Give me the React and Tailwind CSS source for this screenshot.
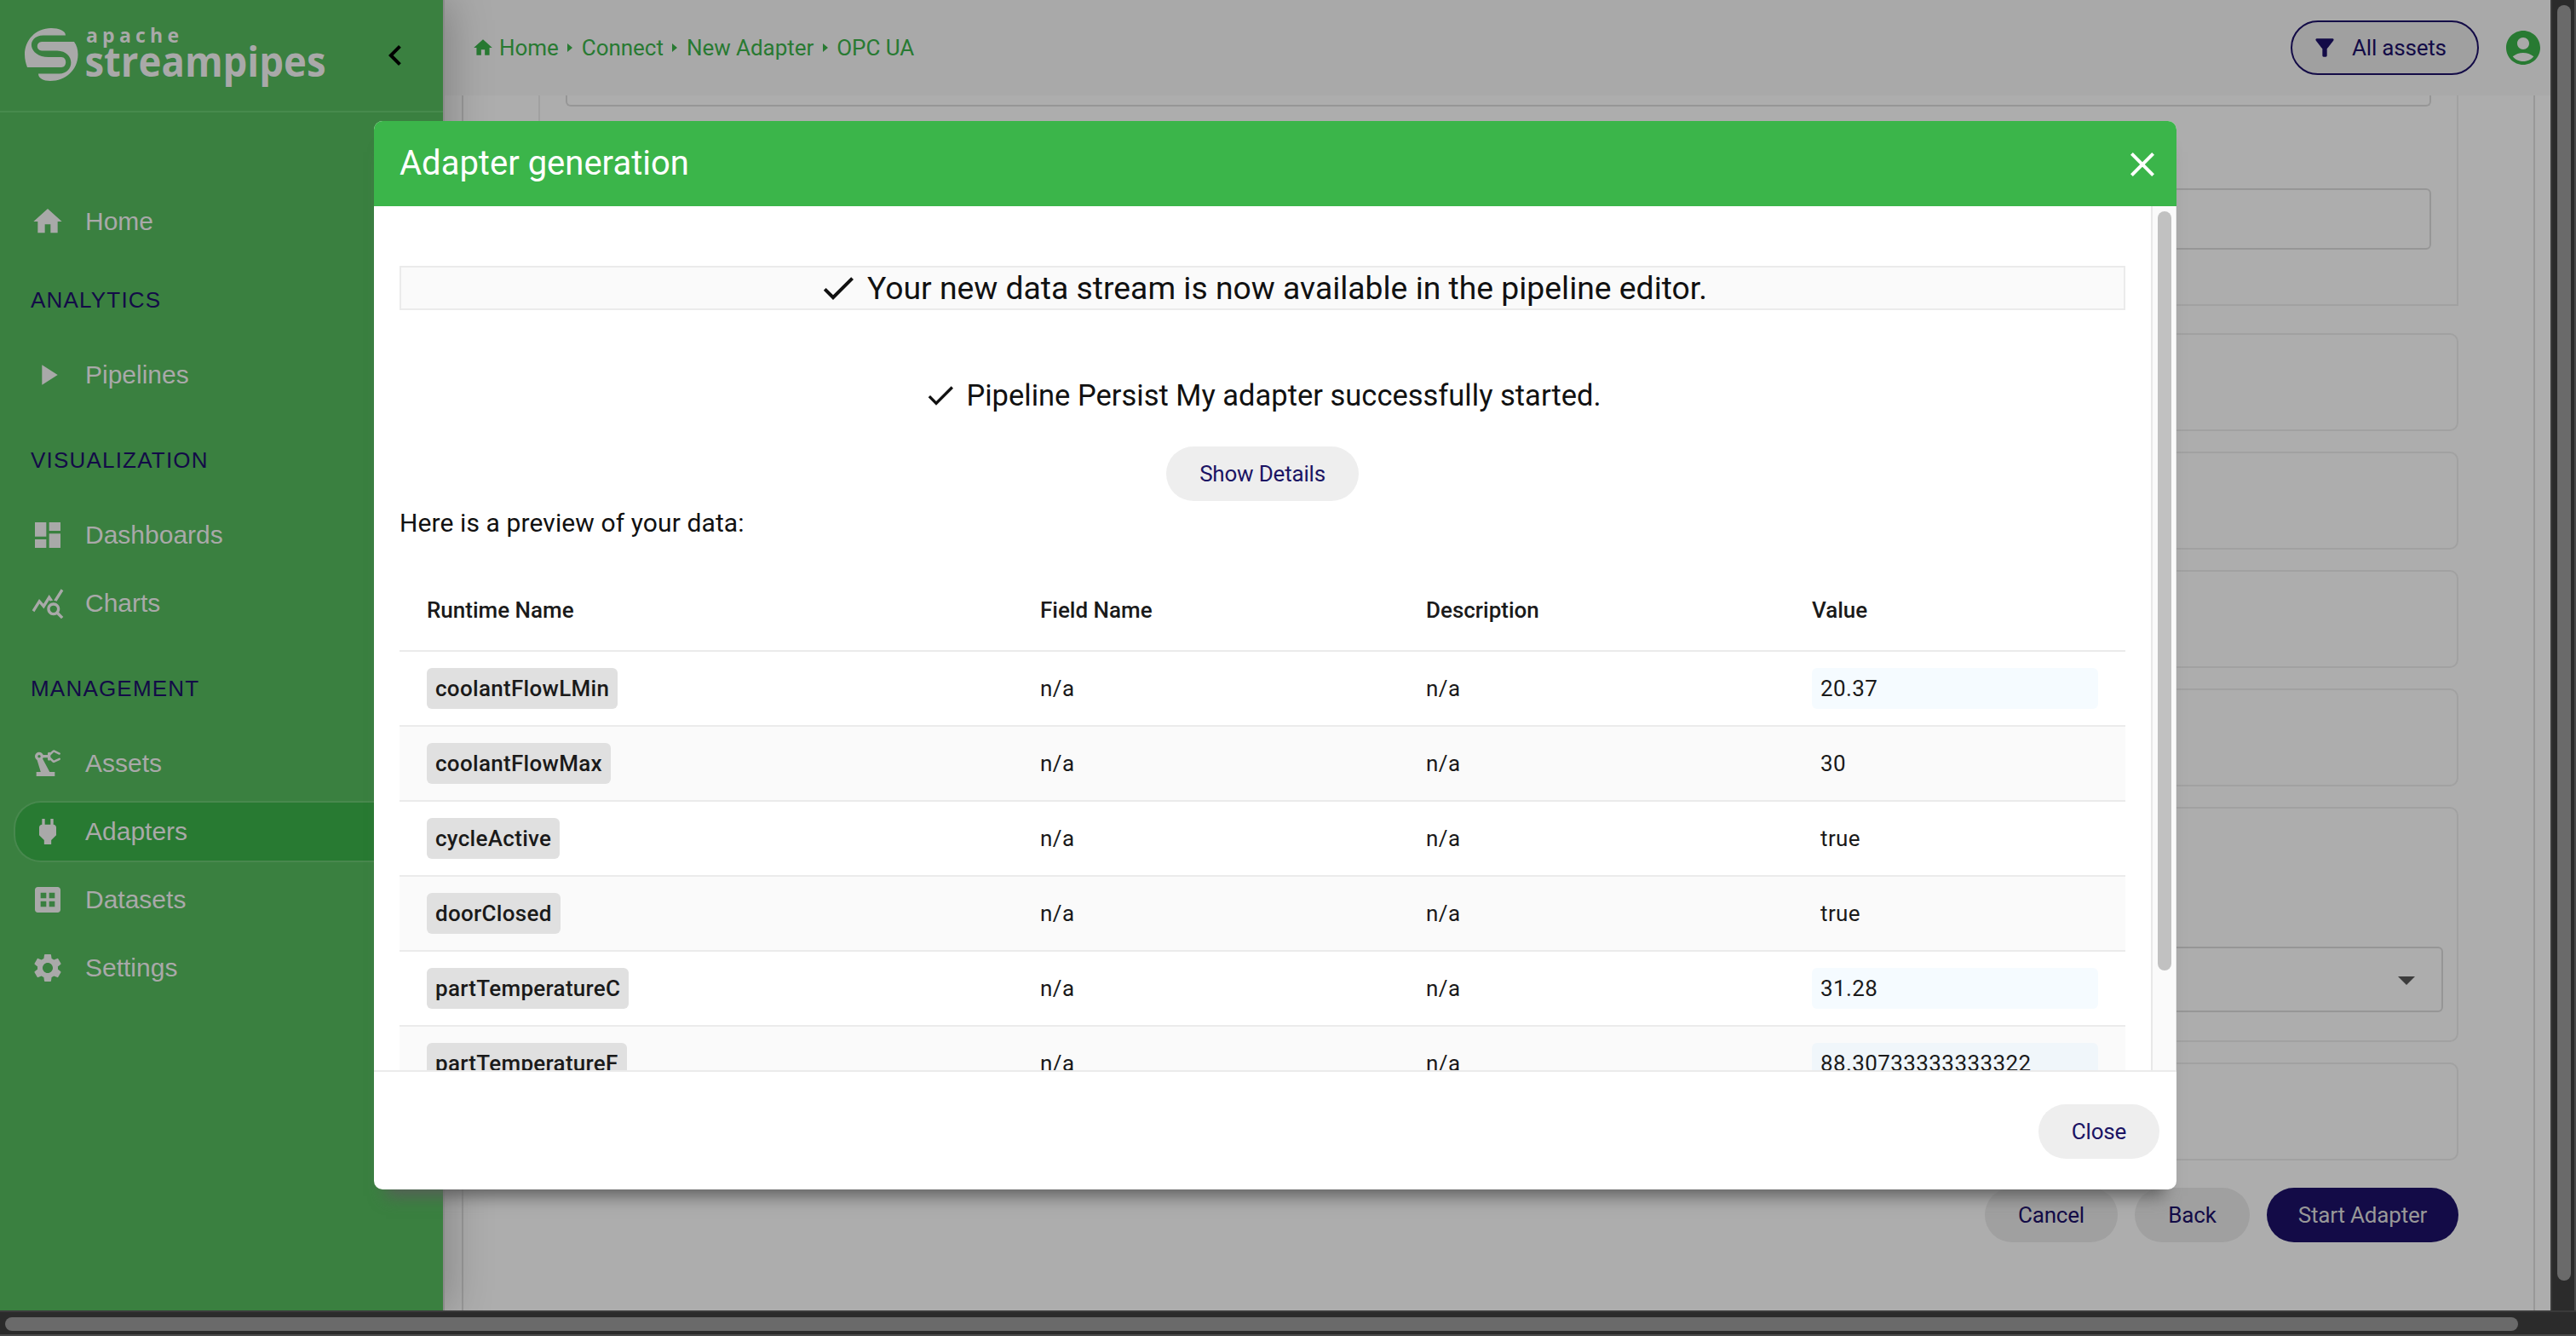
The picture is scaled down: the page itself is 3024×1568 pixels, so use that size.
import {
    MdAccountCircle,
    MdArrowDropDown,
    MdCheck,
    MdClose,
    MdDashboard,
    MdDataset,
    MdFilterAlt,
    MdHome,
    MdKeyboardArrowLeft,
    MdPlayArrow,
    MdPower,
    MdPrecisionManufacturing,
    MdQueryStats,
    MdSettings,
} from "react-icons/md";

const navGroups = [
    { items: [{ label: "Home", Icon: MdHome }] },
    { title: "ANALYTICS", items: [{ label: "Pipelines", Icon: MdPlayArrow }] },
    {
        title: "VISUALIZATION",
        items: [
            { label: "Dashboards", Icon: MdDashboard },
            { label: "Charts", Icon: MdQueryStats },
        ],
    },
    {
        title: "MANAGEMENT",
        items: [
            { label: "Assets", Icon: MdPrecisionManufacturing },
            { label: "Adapters", Icon: MdPower, active: true },
            { label: "Datasets", Icon: MdDataset },
            { label: "Settings", Icon: MdSettings },
        ],
    },
];

const breadcrumbs = ["Home", "Connect", "New Adapter", "OPC UA"];

const previewRows = [
    { name: "coolantFlowLMin", value: "20.37", changed: true },
    { name: "coolantFlowMax", value: "30" },
    { name: "cycleActive", value: "true" },
    { name: "doorClosed", value: "true" },
    { name: "partTemperatureC", value: "31.28", changed: true },
    { name: "partTemperatureF", value: "88.30733333333322", changed: true },
];

function Logo() {
    return (
        <svg className="w-[360px] h-[84px] shrink-0 overflow-visible" viewBox="0 0 360 84" fill="#a9a9a9">
            <path d="M33 8C15 8 2 22 2 39C2 45 3.500 50 5 54H45C52 54 52 42 45 42H30C6 42 3 17 24 16.500H50C50 11 42 8 33 8Z" />
            <path d="M60 24H22C15 24 15 34.500 22 34.500H40C62 35 61 62 42 61.500H18C18 67 24 70 32 70C50 70 64.500 57 64.500 39C64.500 33 63 28 60 24Z" />
            <text x="74" y="24.500" fontSize="23" fontWeight="700" textLength="109" fontFamily="Open Sans, sans-serif">apache</text>
            <text x="72.500" y="65" fontSize="48" fontWeight="700" textLength="283" lengthAdjust="spacingAndGlyphs" fontFamily="Open Sans, sans-serif">streampipes</text>
        </svg>
    );
}

function NavItem({ label, Icon, active }) {
    return (
        <div className={active
            ? "flex items-center h-[72px] ml-4 pl-[18px] gap-6 rounded-l-[32px] border-2 border-r-0 border-[#48884e] bg-[#287a32]"
            : "flex items-center h-[72px] ml-4 pl-5 gap-6"}>
            <Icon className="size-10" />
            <span className="pb-0.5">{label}</span>
        </div>
    );
}

function Sidebar() {
    return (
        <aside className="relative z-10 w-[522px] shrink-0 bg-[#3a8040] border-r-2 border-[#8b8b8b] text-[#a9a9a9] font-['Liberation_Sans',sans-serif] text-[30px] shadow-[4px_0_48px_rgba(0,0,0,0.25)]">
            <div className="flex h-[132px] items-start justify-between pl-[27px] pr-8 pt-[25px] border-b-2 border-[#478a4d]">
                <Logo />
                <MdKeyboardArrowLeft className="size-12 mt-4 text-black" />
            </div>
            <nav className="pt-[92px]">
                {navGroups.map((group) => (
                    <div key={group.items[0].label}>
                        {group.title && (
                            <h2 className="h-[108px] pl-9 pt-1 flex items-center text-[26px] tracking-[1.2px] text-[#130b47]">{group.title}</h2>
                        )}
                        <div className={group.title ? "flex flex-col gap-2 pb-2" : "flex flex-col"}>
                            {group.items.map((item) => <NavItem key={item.label} {...item} />)}
                        </div>
                    </div>
                ))}
            </nav>
        </aside>
    );
}

function TopBar() {
    return (
        <header className="flex items-center h-28 pl-8 pr-2 bg-[#a9a9a9]">
            <div className="flex items-center text-[26px] tracking-[-0.04px] text-[#287a32]">
                <MdHome className="size-[26px] mr-1.5" />
                {breadcrumbs.map((crumb, i) => (
                    <div key={crumb} className="flex items-center">
                        {i > 0 && (
                            <svg className="w-1.5 h-2.5 mx-[10.5px]" viewBox="0 0 6 10" fill="currentColor">
                                <path d="M0 0l6 5-6 5z" />
                            </svg>
                        )}
                        <span>{crumb}</span>
                    </div>
                ))}
            </div>
            <div className="ml-auto flex items-center gap-7">
                <button className="flex items-center w-[221px] h-16 pl-[22px] gap-4 rounded-full border-2 border-[#130b47] bg-[#a0a0a0] text-[#130b47] text-[26px] tracking-[-0.2px]">
                    <MdFilterAlt className="size-8" />
                    All assets
                </button>
                <MdAccountCircle className="size-12 text-[#287a32]" />
            </div>
        </header>
    );
}

function Content() {
    return (
        <main className="flex-1 ml-5 mr-[18px] pl-[88px] pr-[88px] border-x-2 border-[#989898] overflow-hidden">
            <div className="h-[247px] px-[30px] border-2 border-t-0 border-[#a1a1a1]">
                <div className="h-[13px] rounded-b-md border-2 border-t-0 border-[#969696]" />
                <div className="h-[72px] mt-24 rounded-md border-2 border-[#969696]" />
            </div>
            <div className="mt-8 flex flex-col gap-6">
                <div className="h-[115px] rounded-[10px] border-2 border-[#a1a1a1]" />
                <div className="h-[115px] rounded-[10px] border-2 border-[#a1a1a1]" />
                <div className="h-[115px] rounded-[10px] border-2 border-[#a1a1a1]" />
                <div className="h-[115px] rounded-[10px] border-2 border-[#a1a1a1]" />
                <div className="h-[276px] flex flex-col justify-end px-4 pb-[33px] rounded-[10px] border-2 border-[#a1a1a1]">
                    <div className="h-[77px] flex items-center justify-end pr-[17px] rounded-md border-2 border-[#969696]">
                        <MdArrowDropDown className="size-12 text-[#3c3c3c]" />
                    </div>
                </div>
                <div className="h-[115px] rounded-[10px] border-2 border-[#a1a1a1]" />
            </div>
            <div className="mt-8 flex justify-end gap-5 text-[26px] tracking-[-0.2px]">
                <button className="w-[156px] h-16 rounded-full bg-[#a0a0a0] text-[#130b47]">Cancel</button>
                <button className="w-[135px] h-16 rounded-full bg-[#a0a0a0] text-[#130b47]">Back</button>
                <button className="w-[225px] h-16 rounded-full bg-[#130b47] text-[#989898]">Start Adapter</button>
            </div>
        </main>
    );
}

function PreviewTable() {
    return (
        <div className="mt-[35px] text-[26px] text-[#1a1a1a]">
            <div className="flex h-24 items-center pl-8 pr-8 border-b-2 border-[#ebebeb] font-medium">
                <div className="w-[720px]">Runtime Name</div>
                <div className="w-[453px]">Field Name</div>
                <div className="w-[453px]">Description</div>
                <div className="flex-1">Value</div>
            </div>
            {previewRows.map((row) => (
                <div key={row.name} className="flex h-[88px] items-center pl-8 pr-8 border-b-2 border-[#ebebeb] even:bg-white odd:bg-[#fafafa] tracking-[0.4px]">
                    <div className="w-[720px] flex tracking-[0.3px]">
                        <span className="h-12 px-2.5 flex items-center rounded-md bg-[#e0e0e0] font-medium">{row.name}</span>
                    </div>
                    <div className="w-[453px]">n/a</div>
                    <div className="w-[453px]">n/a</div>
                    <div className={row.changed
                        ? "flex-1 h-12 px-2.5 flex items-center rounded-md bg-[rgba(155,215,255,0.1)]"
                        : "flex-1 h-12 px-2.5 flex items-center"}>{row.value}</div>
                </div>
            ))}
        </div>
    );
}

function Dialog() {
    return (
        <div className="absolute z-20 left-[439px] top-[142px] w-[2116px] h-[1254px] flex flex-col rounded-[10px] overflow-hidden bg-white text-[#111]">
            <div className="h-[100px] shrink-0 flex items-center justify-between pl-[30px] pr-4 bg-[#3bb54a] text-white">
                <h1 className="text-[40px]">Adapter generation</h1>
                <MdClose className="size-12 mt-0.5" />
            </div>
            <div className="flex h-[1014px]">
                <div className="flex-1 px-[30px] pt-[70px] overflow-hidden">
                    <div className="h-[52px] flex items-center justify-center gap-2.5 border-2 border-[#ebebeb] bg-[#fafafa] text-[37.3px]">
                        <MdCheck className="size-12" />
                        <span className="pt-0.5">Your new data stream is now available in the pipeline editor.</span>
                    </div>
                    <div className="mt-[76px] h-12 flex items-center justify-center gap-2.5 text-[34.5px]">
                        <MdCheck className="size-10" />
                        <span className="pt-0.5">Pipeline Persist My adapter successfully started.</span>
                    </div>
                    <div className="mt-9 flex justify-center">
                        <button className="w-[226px] h-16 rounded-full bg-[#eee] text-[#1b1464] text-[26px] tracking-[-0.2px]">Show Details</button>
                    </div>
                    <p className="mt-1.5 text-[30px] leading-10 tracking-[0.1px]">Here is a preview of your data:</p>
                    <PreviewTable />
                </div>
                <div className="w-[30px] pt-1.5 pl-1.5 border-l-2 border-r border-[#e8e8e8] bg-[#fafafa]">
                    <div className="w-4 h-[891px] rounded-full bg-[#c1c1c1]" />
                </div>
            </div>
            <div className="flex-1 flex items-center justify-end pr-5 pt-0.5 border-t-2 border-[#ebebeb]">
                <button className="w-[142px] h-16 rounded-full bg-[#eee] text-[#1b1464] text-[26px] tracking-[-0.2px]">Close</button>
            </div>
        </div>
    );
}

export default function App() {
    return (
        <div className="relative w-[3024px] h-[1568px] overflow-hidden flex flex-col bg-[#adadad] font-[Roboto,sans-serif]">
            <div className="flex h-[1538px]">
                <Sidebar />
                <div className="flex-1 flex flex-col overflow-hidden">
                    <TopBar />
                    <Content />
                </div>
                <div className="relative z-10 w-[30px] pl-1.5 pt-1.5 bg-[#2b2b2b] border-l-2 border-l-[#3a3a3a] border-r-2 border-r-[#4a4a4a]">
                    <div className="w-4 h-[1497px] rounded-full bg-[#6a6a6a]" />
                </div>
            </div>
            <div className="relative z-10 h-[30px] pl-1.5 pt-1.5 bg-[#2b2b2b] border-t-2 border-t-[#3a3a3a] border-b-2 border-b-[#4a4a4a]">
                <div className="w-[2950px] h-4 rounded-full bg-[#6a6a6a]" />
            </div>
            <div className="absolute left-[439px] top-[142px] z-20 w-[2116px] h-[1254px] rounded-[10px] shadow-[0_22px_18px_-14px_rgba(90,90,90,0.9)]" />
            <Dialog />
        </div>
    );
}
